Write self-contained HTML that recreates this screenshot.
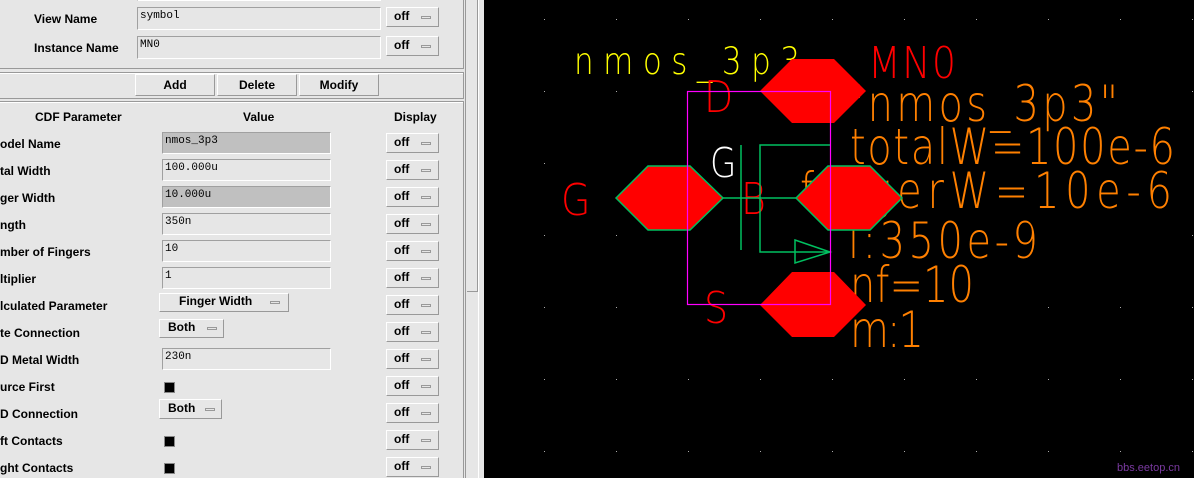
<!DOCTYPE html>
<html><head><style>
body{margin:0;width:1194px;height:478px;overflow:hidden;background:#000;position:relative;font-family:"Liberation Sans",sans-serif}
#lp{position:absolute;left:0;top:0;width:484px;height:478px;background:#e6e6e6;overflow:hidden}
.a{position:absolute}
.lbl{position:absolute;font-weight:bold;font-size:12px;color:#000;white-space:nowrap}
.fld{position:absolute;height:20px;border-top:1px solid #a0a0a0;border-left:1px solid #a0a0a0;border-right:1px solid #fff;border-bottom:1px solid #fff;background:#e6e6e6;font-family:"Liberation Mono",monospace;font-size:11px;padding-left:2px;line-height:16px;box-sizing:border-box}
.g{background:#c0c0c0}
.btn{position:absolute;border-top:1px solid #fff;border-left:1px solid #fff;border-right:1px solid #999;border-bottom:1px solid #999;background:#e6e6e6;font-weight:bold;font-size:12px;box-sizing:border-box;white-space:nowrap}
.off{left:386px;width:53px;height:20px;padding-left:7px;line-height:16px}
.mk{position:absolute;width:10px;height:3px;border:1px solid #999;background:#e6e6e6;box-sizing:border-box}
.off .mk{left:34px;top:8px}
.cb{position:absolute;left:164px;width:11px;height:11px;background:#000;border:1px solid #888;box-sizing:border-box}
.frame{position:absolute;border:1px solid #999;box-shadow:inset 1px 1px 0 #fff}
svg text{font-family:"DejaVu Sans ExtraLight","DejaVu Sans","Liberation Sans",sans-serif;font-weight:200;font-variant-ligatures:none;font-feature-settings:"liga" 0,"kern" 0}
</style></head><body>
<div id="lp">
 <div class="frame" style="left:-2px;top:-2px;width:464px;height:69px"></div>
 <div class="frame" style="left:-2px;top:72px;width:464px;height:25px"></div>
 <div class="frame" style="left:-2px;top:101px;width:464px;height:380px"></div>
 <div class="a" style="left:465px;top:0;width:14px;height:478px;border-left:1px solid #999;border-right:1px solid #fff;box-sizing:border-box"></div>
 <div class="a" style="left:467px;top:0;width:11px;height:292px;border-right:1px solid #999;border-bottom:1px solid #999;box-sizing:border-box"></div>

 <div class="fld" style="left:137px;top:-1px;width:244px;height:2px"></div>
 <div class="lbl" style="left:34px;top:12px">View Name</div>
 <div class="fld" style="left:137px;top:7px;width:244px;height:23px">symbol</div>
 <div class="btn off" style="top:7px;height:20px">off<span class="mk"></span></div>
 <div class="lbl" style="left:34px;top:41px">Instance Name</div>
 <div class="fld" style="left:137px;top:36px;width:244px;height:23px">MN0</div>
 <div class="btn off" style="top:36px;height:20px">off<span class="mk"></span></div>

 <div class="btn" style="left:135px;top:74px;width:80px;height:22px;text-align:center;line-height:20px">Add</div>
 <div class="btn" style="left:217px;top:74px;width:80px;height:22px;text-align:center;line-height:20px">Delete</div>
 <div class="btn" style="left:299px;top:74px;width:80px;height:22px;text-align:center;line-height:20px">Modify</div>

 <div class="lbl" style="left:35px;top:110px">CDF Parameter</div>
 <div class="lbl" style="left:243px;top:110px">Value</div>
 <div class="lbl" style="left:394px;top:110px">Display</div>

 <div class="lbl" style="left:0;top:137px">odel Name</div>
 <div class="fld g" style="left:162px;top:132px;width:169px;height:22px">nmos_3p3</div>
 <div class="lbl" style="left:0;top:164px">tal Width</div>
 <div class="fld" style="left:162px;top:159px;width:169px;height:22px">100.000u</div>
 <div class="lbl" style="left:0;top:191px">ger Width</div>
 <div class="fld g" style="left:162px;top:186px;width:169px;height:22px">10.000u</div>
 <div class="lbl" style="left:0;top:218px">ngth</div>
 <div class="fld" style="left:162px;top:213px;width:169px;height:22px">350n</div>
 <div class="lbl" style="left:0;top:245px">mber of Fingers</div>
 <div class="fld" style="left:162px;top:240px;width:169px;height:22px">10</div>
 <div class="lbl" style="left:0;top:272px">ltiplier</div>
 <div class="fld" style="left:162px;top:267px;width:169px;height:22px">1</div>
 <div class="lbl" style="left:0;top:299px">lculated Parameter</div>
 <div class="btn" style="left:159px;top:293px;width:130px;height:19px;padding-left:19px;line-height:15px">Finger Width<span class="mk" style="left:110px;top:7px"></span></div>
 <div class="lbl" style="left:0;top:326px">te Connection</div>
 <div class="btn" style="left:159px;top:319px;width:65px;height:19px;padding-left:8px;line-height:15px">Both<span class="mk" style="left:47px;top:7px"></span></div>
 <div class="lbl" style="left:0;top:353px">D Metal Width</div>
 <div class="fld" style="left:162px;top:348px;width:169px;height:22px">230n</div>
 <div class="lbl" style="left:0;top:380px">urce First</div>
 <div class="cb" style="top:382px"></div>
 <div class="lbl" style="left:0;top:407px">D Connection</div>
 <div class="btn" style="left:159px;top:399px;width:63px;height:20px;padding-left:8px;line-height:16px">Both<span class="mk" style="left:45px;top:8px"></span></div>
 <div class="lbl" style="left:0;top:434px">ft Contacts</div>
 <div class="cb" style="top:436px"></div>
 <div class="lbl" style="left:0;top:461px">ght Contacts</div>
 <div class="cb" style="top:463px"></div>

 <div class="btn off" style="top:133px">off<span class="mk"></span></div>
 <div class="btn off" style="top:160px">off<span class="mk"></span></div>
 <div class="btn off" style="top:187px">off<span class="mk"></span></div>
 <div class="btn off" style="top:214px">off<span class="mk"></span></div>
 <div class="btn off" style="top:241px">off<span class="mk"></span></div>
 <div class="btn off" style="top:268px">off<span class="mk"></span></div>
 <div class="btn off" style="top:295px">off<span class="mk"></span></div>
 <div class="btn off" style="top:322px">off<span class="mk"></span></div>
 <div class="btn off" style="top:349px">off<span class="mk"></span></div>
 <div class="btn off" style="top:376px">off<span class="mk"></span></div>
 <div class="btn off" style="top:403px">off<span class="mk"></span></div>
 <div class="btn off" style="top:430px">off<span class="mk"></span></div>
 <div class="btn off" style="top:457px">off<span class="mk"></span></div>
</div>

<svg class="a" style="left:0;top:0" width="1194" height="478" viewBox="0 0 1194 478">
 <g fill="#aaa">
  <rect x="544" y="19" width="1" height="1"/><rect x="616" y="19" width="1" height="1"/><rect x="688" y="19" width="1" height="1"/><rect x="760" y="19" width="1" height="1"/><rect x="832" y="19" width="1" height="1"/><rect x="904" y="19" width="1" height="1"/><rect x="976" y="19" width="1" height="1"/><rect x="1048" y="19" width="1" height="1"/><rect x="1120" y="19" width="1" height="1"/><rect x="1192" y="19" width="1" height="1"/>
  <rect x="544" y="91" width="1" height="1"/><rect x="616" y="91" width="1" height="1"/><rect x="1192" y="91" width="1" height="1"/>
  <rect x="544" y="163" width="1" height="1"/><rect x="544" y="235" width="1" height="1"/><rect x="616" y="235" width="1" height="1"/><rect x="1192" y="235" width="1" height="1"/>
  <rect x="544" y="307" width="1" height="1"/><rect x="616" y="307" width="1" height="1"/><rect x="1048" y="307" width="1" height="1"/><rect x="1120" y="307" width="1" height="1"/><rect x="1192" y="307" width="1" height="1"/>
  <rect x="544" y="379" width="1" height="1"/><rect x="616" y="379" width="1" height="1"/><rect x="688" y="379" width="1" height="1"/><rect x="760" y="379" width="1" height="1"/><rect x="832" y="379" width="1" height="1"/><rect x="904" y="379" width="1" height="1"/><rect x="976" y="379" width="1" height="1"/><rect x="1048" y="379" width="1" height="1"/><rect x="1120" y="379" width="1" height="1"/><rect x="1192" y="379" width="1" height="1"/>
  <rect x="544" y="451" width="1" height="1"/><rect x="616" y="451" width="1" height="1"/><rect x="688" y="451" width="1" height="1"/><rect x="760" y="451" width="1" height="1"/><rect x="832" y="451" width="1" height="1"/><rect x="904" y="451" width="1" height="1"/><rect x="976" y="451" width="1" height="1"/><rect x="1048" y="451" width="1" height="1"/><rect x="1120" y="451" width="1" height="1"/><rect x="1192" y="451" width="1" height="1"/>
 </g>
 <text transform="translate(574,74) scale(1,1.2)" fill="#ffff00" font-size="31" textLength="226" lengthAdjust="spacing">nmos_3p3</text>
 <g fill="#ff8000" font-size="40">
  <text transform="translate(846,121) scale(1,1.25)" textLength="272" lengthAdjust="spacing">"nmos_3p3"</text>
  <text transform="translate(850,164) scale(1,1.25)" textLength="325" lengthAdjust="spacing">totalW=100e-6</text>
  <text transform="translate(800,208) scale(1,1.25)" textLength="372" lengthAdjust="spacing">fingerW=10e-6</text>
  <text transform="translate(848,258) scale(1,1.25)" textLength="190" lengthAdjust="spacing">l:350e-9</text>
  <text transform="translate(850,302) scale(1,1.25)" textLength="124" lengthAdjust="spacing">nf=10</text>
  <text transform="translate(850,347) scale(1,1.25)" textLength="74" lengthAdjust="spacing">m:1</text>
 </g>
 <g fill="#ff0000" font-size="38">
  <text transform="translate(868,78) scale(1,1.15)" textLength="88" lengthAdjust="spacing">MN0</text>
  <text transform="translate(704,112) scale(1,1.15)">D</text>
  <text transform="translate(561,215) scale(1,1.15)">G</text>
  <text transform="translate(741,214) scale(1,1.15)">B</text>
  <text transform="translate(704,323) scale(1,1.15)">S</text>
 </g>
 <text transform="translate(710,177) scale(1,1.2)" fill="#fff" font-size="34">G</text>
 <g fill="#ff0000" stroke="#00c060" stroke-width="1.5">
  <polygon points="760,91 792,59 834,59 866,91 834,123 792,123" stroke="none"/>
  <polygon points="616,198 648,166 690,166 723,198 690,230 648,230"/>
  <polygon points="796,198 828,166 870,166 902,198 870,230 828,230"/>
  <polygon points="760,305 792,272 834,272 866,305 834,337 792,337" stroke="none"/>
 </g>
 <g stroke="#00c060" stroke-width="1.5" fill="none">
  <line x1="723" y1="198" x2="796" y2="198"/>
  <line x1="741" y1="145" x2="741" y2="250"/>
  <polyline points="830,145 760,145 760,252 830,252"/>
  <polygon points="795,240 830,252 795,263"/>
 </g>
 <rect x="687.5" y="91.5" width="143" height="213" fill="none" stroke="#ff00ff" stroke-width="1.2"/>
 <text x="1117" y="471" fill="#7a3aa0" font-size="11" style="font-family:'Liberation Sans',sans-serif;font-weight:normal">bbs.eetop.cn</text>
</svg>
</body></html>
